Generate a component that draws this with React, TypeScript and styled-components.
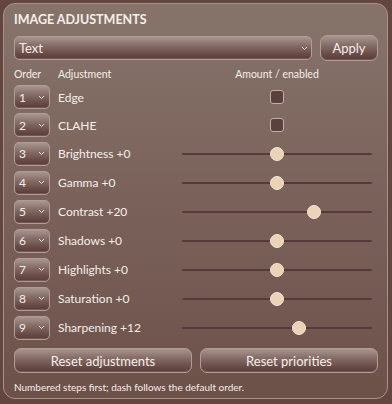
import React from "react";
import styled, { createGlobalStyle } from "styled-components";

const GlobalStyle = createGlobalStyle`
	html, body {
		margin: 0;
		padding: 0;
		background: #634640;
	}
	body {
		font-family: Lato, "Open Sans", sans-serif;
		color: #f6efe9;
	}
`;

const Page = styled.div`
	width: 392px;
	height: 404px;
	padding: 3px;
	box-sizing: border-box;
	background: #634640;
`;

const Panel = styled.div`
	width: 385px;
	height: 396px;
	box-sizing: border-box;
	border: 1px solid #a8938a;
	border-radius: 12px;
	background: linear-gradient(180deg, #86746b 0%, #7a625a 50%, #6c5149 100%);
	padding: 7px 9px 0 10px;
	display: flex;
	flex-direction: column;
`;

const Title = styled.h2`
	margin: 0;
	font-size: 12.5px;
	line-height: 17px;
	font-weight: 700;
`;

const bevel = `
	border: 1px solid #b19d96;
	background: linear-gradient(180deg, #a8958f 0%, #856c66 40%, #6a4d49 75%, #5a3b38 100%);
	box-shadow: inset 0 -1px 0 rgba(255, 240, 230, 0.15);
	box-sizing: border-box;
	color: #f6efe9;
`;

const TopRow = styled.div`
	display: grid;
	grid-template-columns: 1fr 58px;
	gap: 8px;
	align-items: center;
	margin-top: 7px;
	height: 26px;
`;

const SelectBox = styled.div`
	${bevel}
	height: 24px;
	border-radius: 5px;
	display: flex;
	align-items: center;
	justify-content: space-between;
	padding: 0 3px 0 4px;
	font-size: 13px;
`;

const Button = styled.button<{ $h?: number }>`
	${bevel}
	height: ${(p) => p.$h ?? 25}px;
	border-radius: 7px;
	font-family: Lato, "Open Sans", sans-serif;
	font-size: 13px;
	padding: 0;
	cursor: pointer;
`;

const Grid = styled.div`
	display: grid;
	grid-template-columns: 36px 116px 1fr;
	column-gap: 8px;
	align-items: center;
`;

const HeaderRow = styled(Grid)`
	margin-top: 6px;
	font-size: 10.5px;
	line-height: 14px;
`;

const AmountHead = styled.div`
	text-align: center;
	padding-right: 6px;
`;

const Rows = styled.div`
	display: flex;
	flex-direction: column;
	gap: 4px;
	margin-top: 4px;
`;

const Row = styled(Grid)<{ $h: number }>`
	height: ${(p) => p.$h}px;
`;

const OrderBox = styled.div`
	${bevel}
	height: 24px;
	border-radius: 5px;
	display: flex;
	align-items: center;
	justify-content: space-between;
	padding: 0 4px 0 4px;
	font-size: 12px;
`;

const Label = styled.div`
	font-size: 12px;
	white-space: nowrap;
`;

const Control = styled.div`
	display: flex;
	justify-content: center;
	align-items: center;
	padding-right: 6px;
	height: 100%;
`;

const Check = styled.div`
	width: 14px;
	height: 14px;
	box-sizing: border-box;
	border: 1px solid #c2ada4;
	border-radius: 3px;
	background: #5b413d;
`;

const Track = styled.div`
	position: relative;
	width: 100%;
	height: 2px;
	background: #56393a;
	border-radius: 1px;
`;

const Thumb = styled.div`
	position: absolute;
	top: -6px;
	width: 14px;
	height: 14px;
	box-sizing: border-box;
	border-radius: 50%;
	background: #ebd3b7;
	border: 1px solid #f6e8d6;
`;

const Actions = styled.div`
	display: grid;
	grid-template-columns: 1fr 1fr;
	gap: 8px;
	margin-top: 8px;
`;

const Footer = styled.div`
	margin-top: 7px;
	font-size: 10px;
	line-height: 14px;
`;

const Chevron: React.FC = () => (
	<svg width="7" height="5" viewBox="0 0 7 5">
		<polyline points="1,1 3.5,3.5 6,1" fill="none" stroke="#e9dcd6" strokeWidth="1" />
	</svg>
);

type Item = { n: number; name: string; value?: number };

const items: Item[] = [
	{ n: 1, name: "Edge" },
	{ n: 2, name: "CLAHE" },
	{ n: 3, name: "Brightness", value: 0 },
	{ n: 4, name: "Gamma", value: 0 },
	{ n: 5, name: "Contrast", value: 20 },
	{ n: 6, name: "Shadows", value: 0 },
	{ n: 7, name: "Highlights", value: 0 },
	{ n: 8, name: "Saturation", value: 0 },
	{ n: 9, name: "Sharpening", value: 12 },
];

const App: React.FC = () => {
	return (
		<Page>
			<GlobalStyle />
			<Panel>
				<Title>IMAGE ADJUSTMENTS</Title>
				<TopRow>
					<SelectBox>
						<span>Text</span>
						<Chevron />
					</SelectBox>
					<Button $h={26}>Apply</Button>
				</TopRow>
				<HeaderRow>
					<div>Order</div>
					<div>Adjustment</div>
					<AmountHead>Amount / enabled</AmountHead>
				</HeaderRow>
				<Rows>
					{items.map((it) => {
						const slider = it.value !== undefined;
						const frac = slider ? ((it.value as number) + 48) / 96 : 0;
						return (
							<Row key={it.n} $h={slider ? 25 : 24}>
								<OrderBox>
									<span>{it.n}</span>
									<Chevron />
								</OrderBox>
								<Label>
									{it.name}
									{slider ? ` +${it.value}` : ""}
								</Label>
								<Control>
									{slider ? (
										<Track>
											<Thumb style={{ left: `calc(${frac} * (100% - 14px))` }} />
										</Track>
									) : (
										<Check />
									)}
								</Control>
							</Row>
						);
					})}
				</Rows>
				<Actions>
					<Button>Reset adjustments</Button>
					<Button>Reset priorities</Button>
				</Actions>
				<Footer>Numbered steps first; dash follows the default order.</Footer>
			</Panel>
		</Page>
	);
};

export default App;
